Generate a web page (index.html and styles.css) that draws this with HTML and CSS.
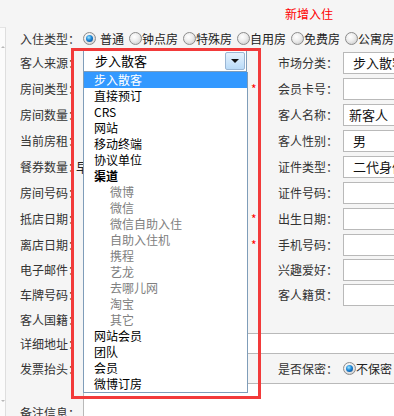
FILE: index.html
```html
<html lang="zh-CN">
  <head>
    <meta charset="UTF-8" />
    <title>新增入住</title>
    <link rel="stylesheet" href="styles.css">
  </head>
  <body>
    <div class="page">
      <div class="side">
        <span class="notch"></span>
        <span class="notch bottom"></span>
      </div>
      <div class="main">
        <div class="title">新增入住</div>
        <div class="type-row">
          <span class="lbl">入住类型：</span>
          <div class="radios">
            <label class="opt first"><span class="radio on"></span><span class="txt">普通</span></label>
            <label class="opt"><span class="radio"></span><span class="txt">钟点房</span></label>
            <label class="opt"><span class="radio"></span><span class="txt">特殊房</span></label>
            <label class="opt"><span class="radio"></span><span class="txt">自用房</span></label>
            <label class="opt"><span class="radio"></span><span class="txt">免费房</span></label>
            <label class="opt"><span class="radio"></span><span class="txt">公寓房</span></label>
          </div>
        </div>

        <div class="form">
          <span class="lbl">客人来源：</span>
          <div class="combo">
            <div class="combo-box">
              <span class="combo-val">步入散客</span>
              <span class="combo-btn"><i></i></span>
            </div>
            <ul class="combo-list">
              <li class="sel">步入散客</li>
              <li>直接预订</li>
              <li>CRS</li>
              <li>网站</li>
              <li>移动终端</li>
              <li>协议单位</li>
              <li class="group">渠道</li>
              <li class="sub">微博</li>
              <li class="sub">微信</li>
              <li class="sub">微信自助入住</li>
              <li class="sub">自助入住机</li>
              <li class="sub">携程</li>
              <li class="sub">艺龙</li>
              <li class="sub">去哪儿网</li>
              <li class="sub">淘宝</li>
              <li class="sub">其它</li>
              <li>网站会员</li>
              <li>团队</li>
              <li>会员</li>
              <li>微博订房</li>
            </ul>
          </div>
          <span class="star"></span>
          <span class="lbl">市场分类：</span>
          <div class="field"><span class="box select">步入散客</span></div>

          <span class="lbl">房间类型：</span>
          <div class="field"><span class="box"></span></div>
          <span class="star">*</span>
          <span class="lbl">会员卡号：</span>
          <div class="field"><span class="box"></span></div>

          <span class="lbl">房间数量：</span>
          <div class="field"><span class="box"></span></div>
          <span class="star"></span>
          <span class="lbl">客人名称：</span>
          <div class="field"><span class="box">新客人</span></div>

          <span class="lbl">当前房租：</span>
          <div class="field"><span class="box"></span></div>
          <span class="star"></span>
          <span class="lbl">客人性别：</span>
          <div class="field"><span class="box select">男</span></div>

          <span class="lbl">餐券数量：</span>
          <div class="field"><span class="meal">早</span></div>
          <span class="star"></span>
          <span class="lbl">证件类型：</span>
          <div class="field"><span class="box select">二代身份证</span></div>

          <span class="lbl">房间号码：</span>
          <div class="field"><span class="box"></span></div>
          <span class="star"></span>
          <span class="lbl">证件号码：</span>
          <div class="field"><span class="box"></span></div>

          <span class="lbl">抵店日期：</span>
          <div class="field"><span class="box"></span></div>
          <span class="star">*</span>
          <span class="lbl">出生日期：</span>
          <div class="field"><span class="box"></span></div>

          <span class="lbl">离店日期：</span>
          <div class="field"><span class="box"></span></div>
          <span class="star">*</span>
          <span class="lbl">手机号码：</span>
          <div class="field"><span class="box"></span></div>

          <span class="lbl">电子邮件：</span>
          <div class="field"><span class="box"></span></div>
          <span class="star"></span>
          <span class="lbl">兴趣爱好：</span>
          <div class="field"><span class="box"></span></div>

          <span class="lbl">车牌号码：</span>
          <div class="field"><span class="box"></span></div>
          <span class="star"></span>
          <span class="lbl">客人籍贯：</span>
          <div class="field"><span class="box"></span></div>

          <span class="lbl">客人国籍：</span>
          <div class="field"><span class="box"></span></div>
          <span class="star"></span>
          <span class="lbl"></span>
          <div class="field"></div>

          <span class="lbl">详细地址：</span>
          <div class="wide"><span class="box long"></span></div>

          <span class="lbl">发票抬头：</span>
          <div class="field"><span class="box"></span></div>
          <span class="star"></span>
          <span class="lbl">是否保密：</span>
          <div class="field">
            <label class="opt"><span class="radio on"></span><span class="txt">不保密</span></label>
          </div>

          <span class="lbl">备注信息：</span>
          <div class="wide"><span class="box memo"></span></div>
        </div>
      </div>

      <div class="mark"></div>
    </div>
  </body>
</html>
```

FILE: styles.css
```css
* {
  box-sizing: border-box;
}

body {
  margin: 0;
  background: #f5f5f5;
  font-family: "Noto Sans CJK SC", "Noto Sans", sans-serif;
  font-size: 12px;
  color: #333;
}

.page {
  position: relative;
  display: flex;
  width: 394px;
  height: 416px;
  overflow: hidden;
}

.side {
  flex: none;
  width: 6px;
  margin-top: 27px;
  display: flex;
  flex-direction: column;
  justify-content: space-between;
  padding: 18px 0 14px 1px;
  background: #fbfbfb;
  border-top: 1px solid #e4e4e4;
  border-right: 1px solid #dedede;
}

.notch {
  width: 0;
  height: 0;
  border-left: 2px solid transparent;
  border-right: 2px solid transparent;
  border-bottom: 2px solid #b8b8b8;
}

.notch.bottom {
  border-bottom: 0;
  border-top: 2px solid #b8b8b8;
}

.main {
  flex: none;
  padding-left: 14px;
}

.title {
  height: 27px;
  line-height: 27px;
  padding-left: 265px;
  color: #f00;
}

.type-row {
  display: flex;
  align-items: center;
  height: 23px;
}

.type-row .lbl {
  width: 63px;
  flex: none;
}

.lbl {
  white-space: nowrap;
  line-height: 16px;
  align-self: center;
}

.radios {
  display: flex;
  align-items: center;
  gap: 5px;
}

.opt {
  display: flex;
  align-items: center;
  white-space: nowrap;
  color: #222;
  line-height: 16px;
}

.opt.first .txt {
  margin-left: 4px;
}

.radio {
  display: inline-flex;
  align-items: center;
  justify-content: center;
  width: 13px;
  height: 13px;
  border-radius: 50%;
  border: 1px solid #8c8c8c;
  background: radial-gradient(circle at 40% 35%, #fff 0, #ececec 45%, #c2c2c2 100%);
}

.radio.on::after {
  content: "";
  width: 7px;
  height: 7px;
  border-radius: 50%;
  background: radial-gradient(circle at 40% 35%, #9fe6ff 0, #1c86d6 45%, #0a3c7c 100%);
}

.form {
  display: grid;
  grid-template-columns: 63px 165px 30px 65px 150px;
  grid-template-rows: repeat(7, 26px) repeat(3, 25px) 26px 21px 29px 60px;
}

.field {
  display: flex;
  align-items: center;
}

.wide {
  grid-column: 2 / 6;
  display: flex;
}

.box {
  display: block;
  width: 150px;
  height: 22px;
  padding-left: 5px;
  line-height: 20px;
  font-size: 13px;
  color: #111;
  background: #fff;
  border: 1px solid #b9b9b9;
  white-space: nowrap;
  overflow: hidden;
}

.box.select {
  padding-left: 9px;
}

.box.long {
  width: 400px;
  height: 21px;
}

.box.memo {
  width: 400px;
  height: 60px;
}

.meal {
  margin-left: -7px;
  font-size: 13px;
  line-height: 16px;
  color: #222;
}

.star {
  padding-left: 3px;
  color: #f00;
  line-height: 16px;
  align-self: center;
}

.combo {
  position: relative;
  align-self: start;
}

.combo-box {
  display: flex;
  align-items: stretch;
  width: 164px;
  height: 22px;
  padding: 1px;
  background: #fff;
  border: 1px solid #7f9db9;
}

.combo-val {
  flex: 1;
  padding-left: 10px;
  line-height: 18px;
  font-size: 13px;
  color: #000;
}

.combo-btn {
  display: flex;
  align-items: center;
  justify-content: center;
  width: 20px;
  border: 1px solid #9ab6d4;
  border-radius: 2px;
  background: linear-gradient(#e6f2fd, #b9dbf8);
}

.combo-btn i {
  width: 0;
  height: 0;
  border-left: 4px solid transparent;
  border-right: 4px solid transparent;
  border-top: 4px solid #111;
}

.combo-list {
  position: absolute;
  top: 22px;
  left: 0;
  width: 165px;
  margin: 0;
  padding: 0;
  list-style: none;
  background: #fff;
  border: 1px solid #7f9db9;
  border-top: 0;
}

.combo-list li {
  height: 16px;
  padding-left: 10px;
  line-height: 16px;
  font-size: 12px;
  color: #000;
  white-space: nowrap;
}

.combo-list li.sel {
  background: #3399ff;
  color: #fff;
}

.combo-list li.group {
  font-weight: bold;
}

.combo-list li.sub {
  padding-left: 26px;
  color: #808080;
}

.mark {
  position: absolute;
  left: 71px;
  top: 48px;
  width: 190px;
  height: 351px;
  border: 3px solid #f23a3a;
}
```
